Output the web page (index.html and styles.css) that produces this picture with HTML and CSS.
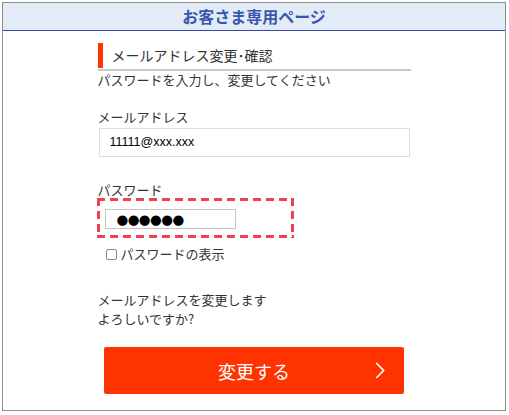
FILE: index.html
```html
<!DOCTYPE html>
<html lang="ja">
<head>
<meta charset="utf-8">
<title>お客さま専用ページ</title>
<link rel="stylesheet" href="styles.css">
</head>
<body>
<div class="frame">
  <header class="page-head">お客さま専用ページ</header>
  <main class="content">
    <h1 class="section-title"><span class="section-bar">メールアドレス変更･確認</span></h1>
    <p class="intro">パスワードを入力し、変更してください</p>

    <div class="field-label field-label--first">メールアドレス</div>
    <div class="text-box">11111@xxx.xxx</div>

    <div class="field-label">パスワード</div>
    <div class="highlight">
      <div class="pw-box"><span class="pw-dots">●●●●●●</span></div>
    </div>

    <label class="check-row"><input type="checkbox" class="check"><span>パスワードの表示</span></label>

    <p class="confirm">メールアドレスを変更します<br>よろしいですか?</p>

    <button class="submit" type="button">
      <span class="submit-label">変更する</span>
      <svg class="chev" width="10" height="17" viewBox="0 0 10 17"><path d="M1.2 1 L8.6 8.5 L1.2 16" fill="none" stroke="#fff" stroke-width="1.7"/></svg>
    </button>
  </main>
</div>
</body>
</html>
```
FILE: styles.css
```css
* { box-sizing: border-box; }
html, body { margin: 0; padding: 0; background: #fff; }
body {
  font-family: "Noto Sans CJK JP", "Noto Sans", sans-serif;
  color: #333;
  font-size: 13px;
}
.frame {
  margin: 2px 3px 0 2px;
  border: 1px solid #8c8c8c;
  height: 409px;
}
.page-head {
  height: 28px;
  line-height: 27px;
  background: #e3ebf6;
  border-bottom: 1px solid #2f4ba6;
  text-align: center;
  color: #3a55ae;
  font-weight: bold;
  font-size: 16px;
}
.content {
  width: 313px;
  margin: 0 auto;
}
.section-title {
  margin: 12px 0 0;
  font-size: 14px;
  font-weight: normal;
  color: #333;
  border-bottom: 2px solid #c8c8c8;
  padding-bottom: 1px;
}
.section-bar {
  display: block;
  height: 25px;
  line-height: 25px;
  border-left: 5px solid #ff3300;
  padding-left: 9px;
}
.intro {
  margin: 0;
  line-height: 18px;
}
.field-label {
  margin-top: 25px;
  line-height: 16px;
}
.field-label--first { margin-top: 20px; }
.text-box {
  margin: 3px 0 0 1px;
  width: 311px;
  height: 29px;
  border: 1px solid #dcdcdc;
  padding-left: 10px;
  line-height: 27px;
  font-family: "Liberation Sans", Arial, sans-serif;
  font-size: 12.5px;
  color: #000;
}
.highlight {
  margin: 0 0 0 -1px;
  width: 197px;
  height: 40px;
  padding: 11px 0 0 8px;
  background:
    repeating-linear-gradient(90deg, #f2404f 0 8px, transparent 8px 13px) left top / 100% 3px no-repeat,
    repeating-linear-gradient(90deg, #f2404f 0 8px, transparent 8px 13px) left bottom / 100% 3px no-repeat,
    repeating-linear-gradient(180deg, #f2404f 0 8px, transparent 8px 13px) left top / 3px 100% no-repeat,
    repeating-linear-gradient(180deg, #f2404f 0 8px, transparent 8px 13px) right top / 3px 100% no-repeat;
}
.pw-box {
  width: 131px;
  height: 20px;
  border: 1px solid #c4c4c4;
  padding-left: 11px;
  line-height: 18px;
  color: #000;
}
.pw-dots {
  font-family: "DejaVu Sans", sans-serif;
  font-size: 13.5px;
  letter-spacing: -0.6px;
}
.check-row {
  display: flex;
  align-items: center;
  gap: 4px;
  margin: 7px 0 0 8px;
  line-height: 18px;
}
.check {
  appearance: none;
  -webkit-appearance: none;
  margin: 0;
  width: 11px;
  height: 11px;
  border: 1px solid #8a8a8a;
  border-radius: 2px;
  background: #fff;
}
.confirm {
  margin: 27px 0 0;
  line-height: 19px;
}
.submit {
  display: flex;
  align-items: center;
  justify-content: center;
  position: relative;
  margin: 19px auto 0;
  width: 300px;
  height: 47px;
  border: 0;
  border-radius: 2px;
  background: #ff3300;
  color: #fff;
  font-family: "Noto Sans CJK JP", sans-serif;
  font-size: 18px;
  padding: 0;
}
.chev {
  position: absolute;
  right: 19px;
  top: 15px;
}
```
